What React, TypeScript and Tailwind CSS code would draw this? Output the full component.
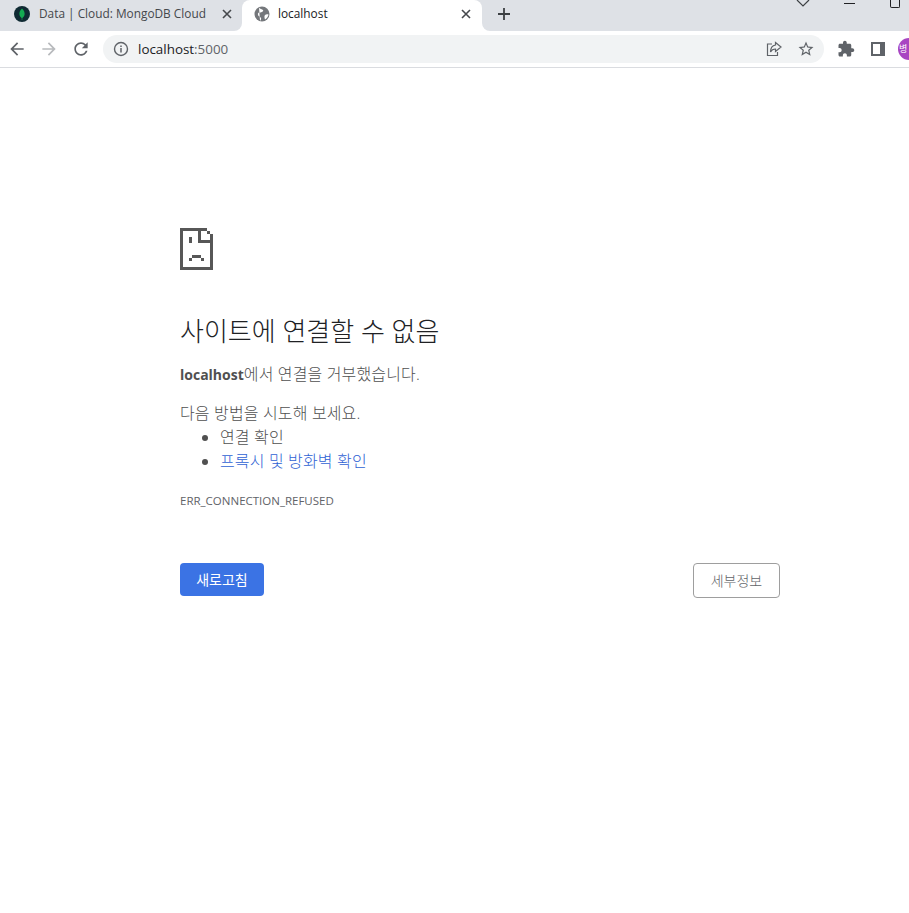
import { ReactNode } from "react";

const font = "font-['Open_Sans','Noto_Sans_CJK_KR',sans-serif]";

function Flare({ side }: { side: "left" | "right" }) {
  return (
    <div
      className={
        side == "left"
          ? "absolute bottom-0 -left-2 w-2 h-2 bg-white"
          : "absolute bottom-0 -right-2 w-2 h-2 bg-white"
      }
    >
      <div
        className={
          side == "left"
            ? "w-full h-full bg-[#dee1e6] rounded-br-lg"
            : "w-full h-full bg-[#dee1e6] rounded-bl-lg"
        }
      />
    </div>
  );
}

function CloseIcon() {
  return (
    <svg width="10" height="10" viewBox="0 0 10 10" className="shrink-0">
      <path d="M1 1l8 8M9 1l-8 8" stroke="#45484c" strokeWidth="1.6" />
    </svg>
  );
}

function ToolIcon({ fill, size = 20, children }: { fill: string; size?: number; children: ReactNode }) {
  return (
    <svg width={size} height={size} viewBox="0 0 24 24" fill={fill} className="shrink-0">
      {children}
    </svg>
  );
}

function SadPage() {
  return (
    <svg width="33" height="42" viewBox="0 0 11 14" fill="#575757" shapeRendering="crispEdges">
      <rect x="0" y="0" width="9" height="1" />
      <rect x="0" y="0" width="1" height="14" />
      <rect x="0" y="13" width="11" height="1" />
      <rect x="10" y="2" width="1" height="12" />
      <rect x="9" y="1" width="1" height="1" />
      <rect x="6" y="0" width="1" height="5" />
      <rect x="6" y="4" width="5" height="1" />
      <rect x="3" y="3" width="1" height="2" />
      <rect x="4" y="9" width="3" height="1" />
      <rect x="3" y="10" width="1" height="1" />
      <rect x="7" y="10" width="1" height="1" />
    </svg>
  );
}

export default function App() {
  return (
    <div className={`w-[909px] h-[913px] overflow-hidden bg-white ${font}`}>
      {/* tab strip */}
      <div className="h-[31px] bg-[#dee1e6] flex relative">
        <div className="w-[242px] flex items-center pl-[14px] pr-[10px] pb-[3px]">
          <svg width="16" height="16" viewBox="0 0 16 16" className="shrink-0">
            <circle cx="8" cy="8" r="8" fill="#0f2a33" />
            <path d="M8 2.500c2.200 2 2.800 4 2.600 5.800C10.400 10.500 9 11.500 8.300 12.200V14H7.700v-1.800C7 11.500 5.600 10.500 5.400 8.300 5.200 6.500 5.800 4.500 8 2.500z" fill="#13aa52" />
          </svg>
          <span className="ml-[9px] text-[11.85px] text-[#45484c] whitespace-nowrap flex-1">
            Data | Cloud: MongoDB Cloud
          </span>
          <CloseIcon />
        </div>
        <div className="w-[240px] bg-white rounded-t-lg flex items-center pl-[12px] pr-[11px] pb-[3px] relative">
          <Flare side="left" />
          <Flare side="right" />
          <svg width="16" height="16" viewBox="0 0 16 16" className="shrink-0">
            <circle cx="8" cy="8" r="7.500" fill="#74777b" />
            <path d="M5 1.500c1 1.500 3 1.500 4 2.500S7.500 6.500 6 6.500 3.500 7 4 9s2.500 1.500 3 3-.5 2.500-1 2.700M11 9c1-1 2.500-1 3.500-.5-.3 2-1.500 3.800-3.500 5C10.500 12 10 10 11 9z" fill="#fff" />
          </svg>
          <span className="ml-[8px] text-[11.85px] text-[#202124] flex-1">localhost</span>
          <CloseIcon />
        </div>
        <div className="ml-[15px] flex items-center pb-[3px]">
          <svg width="14" height="14" viewBox="0 0 14 14">
            <path d="M7 1v12M1 7h12" stroke="#3c4043" strokeWidth="1.800" />
          </svg>
        </div>
        <div className="ml-auto flex items-start">
          <svg width="14" height="7" viewBox="0 0 14 7" className="mr-[34px]">
            <path d="M1 0l6 6 6-6" fill="none" stroke="#3c4043" strokeWidth="1.200" />
          </svg>
          <div className="w-[11px] h-px bg-[#202124] mt-[3px] mr-[35px]" />
          <div className="w-[10px] h-[8px] border border-t-0 border-[#202124] rounded-b-[2px] mr-[9px]" />
        </div>
      </div>

      {/* toolbar */}
      <div className="h-[37px] bg-white border-b border-[#dadce0] flex items-center">
        <div className="w-[103px] shrink-0 flex items-center pl-[7px] gap-[12px]">
          <ToolIcon fill="#5f6368">
            <path d="M20 11H7.830l5.590-5.590L12 4l-8 8 8 8 1.410-1.410L7.830 13H20v-2z" />
          </ToolIcon>
          <ToolIcon fill="#b8babd">
            <path d="M4 11h12.170l-5.590-5.590L12 4l8 8-8 8-1.410-1.410L16.170 13H4v-2z" />
          </ToolIcon>
          <ToolIcon fill="#5f6368">
            <path d="M17.650 6.350C16.200 4.900 14.210 4 12 4c-4.420 0-7.990 3.580-7.990 8s3.570 8 7.990 8c3.730 0 6.840-2.550 7.730-6h-2.080c-.82 2.330-3.040 4-5.650 4-3.310 0-6-2.690-6-6s2.690-6 6-6c1.660 0 3.140.69 4.220 1.780L13 11h7V4l-2.350 2.350z" />
          </ToolIcon>
        </div>
        <div className="w-[721px] shrink-0 h-[28px] rounded-full bg-[#f1f3f4] flex items-center pl-[10px] pr-[9px]">
          <svg width="16" height="16" viewBox="0 0 16 16" className="shrink-0">
            <circle cx="8" cy="8" r="6.500" fill="none" stroke="#5f6368" strokeWidth="1.400" />
            <path d="M8 7v4.500M8 4.500v1.500" stroke="#5f6368" strokeWidth="1.500" />
          </svg>
          <span className="ml-[9px] text-[13.4px] text-[#202124] flex-1">
            localhost<span className="text-[#5f6368]">:5000</span>
          </span>
          <svg width="16" height="16" viewBox="0 0 16 16" className="shrink-0 mr-[15px]">
            <path d="M6 3H1.500v11.500h10V11" fill="none" stroke="#5f6368" strokeWidth="1.200" />
            <path d="M9.500 1.500L15 6l-5.500 4.500V8C7 8 5.500 9 4.500 11c0-4 2-6.500 5-7z" fill="none" stroke="#5f6368" strokeWidth="1.200" />
          </svg>
          <ToolIcon fill="#5f6368" size={18}>
            <path d="M22 9.240l-7.190-.620L12 2 9.190 8.630 2 9.240l5.460 4.730L5.820 21 12 17.270 18.180 21l-1.630-7.030L22 9.240zM12 15.400l-3.760 2.270 1-4.280-3.320-2.880 4.380-.380L12 6.100l1.710 4.040 4.380.380-3.320 2.880 1 4.280L12 15.400z" />
          </ToolIcon>
        </div>
        <div className="ml-[13px] flex items-center shrink-0">
          <ToolIcon fill="#5f6368" size={18}>
            <path d="M20.500 11H19V7c0-1.100-.9-2-2-2h-4V3.500C13 2.120 11.880 1 10.500 1S8 2.120 8 3.500V5H4c-1.100 0-1.990.9-1.990 2v3.800H3.500c1.490 0 2.700 1.210 2.700 2.700s-1.210 2.700-2.700 2.700H2V20c0 1.100.9 2 2 2h3.800v-1.500c0-1.490 1.210-2.700 2.700-2.700 1.490 0 2.700 1.210 2.700 2.700V22H17c1.100 0 2-.9 2-2v-4h1.500c1.380 0 2.500-1.120 2.500-2.500S21.880 11 20.500 11z" />
          </ToolIcon>
          <div className="ml-[16px] w-[14px] h-[14px] border-2 border-r-[5px] border-[#5f6368] bg-white shrink-0" />
          <div className="ml-[13px] w-[22px] h-[22px] rounded-full bg-[#a845c2] shrink-0 flex items-center text-[9px] text-white pl-[1px] overflow-hidden">
            병
          </div>
        </div>
      </div>

      {/* error page */}
      <main className="ml-[180px] w-[600px] pt-[160px] text-[16px] leading-[24px] font-light tracking-[0.15px] text-[#505050]">
        <SadPage />
        <h1 className="mt-[45px] text-[26px] leading-[32px] font-light tracking-normal text-[#202124]">
          사이트에 연결할 수 없음
        </h1>
        <p className="mt-[15px]">
          <strong className="font-bold text-[14px] tracking-normal">localhost</strong>에서 연결을 거부했습니다.
        </p>
        <p className="mt-[14px]">다음 방법을 시도해 보세요.</p>
        <ul className="list-disc pl-[40px]">
          <li>연결 확인</li>
          <li>
            <span className="text-[#2f62d4]">프록시 및 방화벽 확인</span>
          </li>
        </ul>
        <div className="mt-[19px] text-[11.5px] leading-[18px] font-normal tracking-normal text-[#5f6368]">
          ERR_CONNECTION_REFUSED
        </div>
        <div className="mt-[53px] flex justify-between items-start tracking-normal">
          <button className="w-[84px] h-[33px] rounded-[4px] bg-[#3b73e4] text-white text-[14px] font-normal">
            새로고침
          </button>
          <button className="w-[87px] h-[35px] rounded-[4px] border border-[#9e9e9e] bg-white text-[#5f6368] text-[14px] font-light">
            세부정보
          </button>
        </div>
      </main>
    </div>
  );
}
